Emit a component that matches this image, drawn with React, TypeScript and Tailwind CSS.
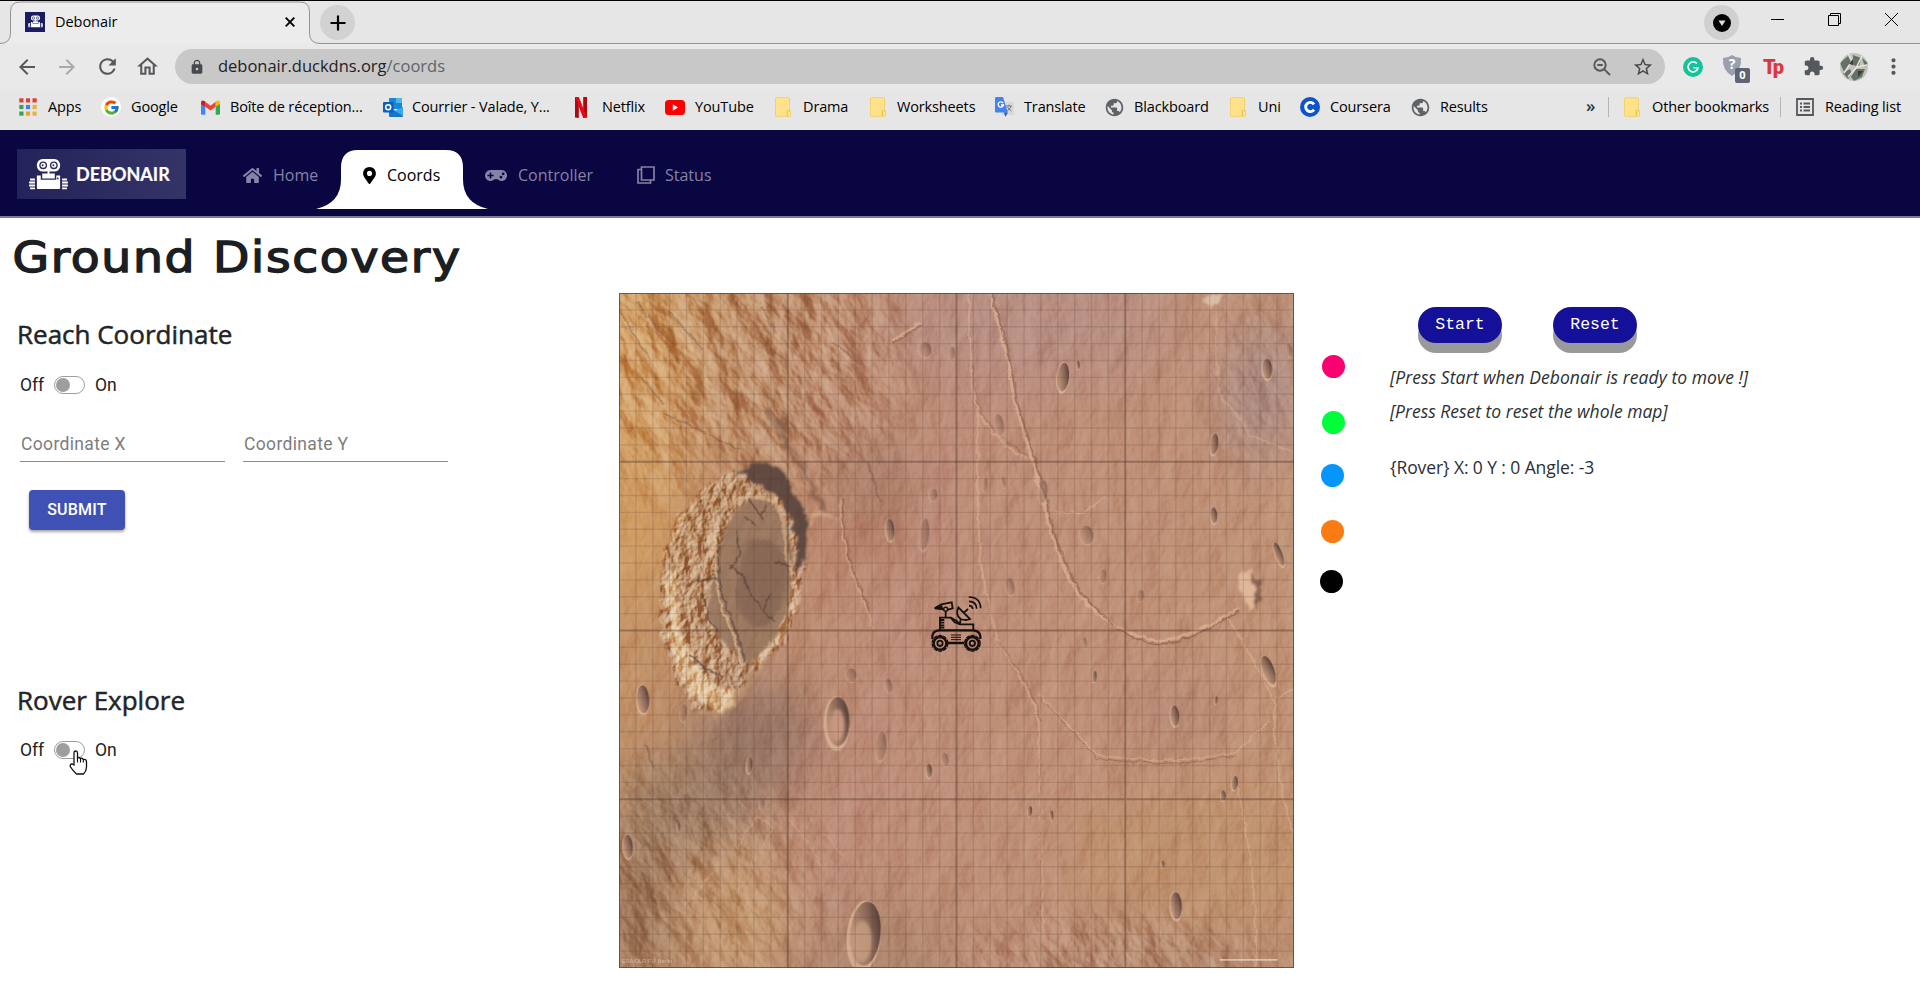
import React from "react";
import { FcGoogle } from "react-icons/fc";
import { FaHome, FaMapMarkerAlt, FaGamepad } from "react-icons/fa";
import {
  MdArrowBack, MdArrowForward, MdRefresh, MdOutlineHome, MdLock,
  MdStarBorder, MdExtension, MdMoreVert, MdPublic,
} from "react-icons/md";

const ui = "font-['Open_Sans',sans-serif]";

function RobotMark({ className }: { className: string }) {
  return (
    <svg className={className} viewBox="0 0 40 32" fill="#fff">
      <rect x="8" y="0" width="24" height="13" rx="6" />
      <circle cx="14.5" cy="6.5" r="4" fill="#29285f" />
      <circle cx="25.5" cy="6.5" r="4" fill="#29285f" />
      <circle cx="14.5" cy="6.5" r="2.600" />
      <circle cx="25.5" cy="6.5" r="2.600" />
      <circle cx="14" cy="6.5" r="1" fill="#29285f" />
      <circle cx="25" cy="6.5" r="1" fill="#29285f" />
      <path d="M19 12h2v3h5.500v5h-13v-5H19z" />
      <path d="M8 17h4v4.500h16V17h4v13q0 1-1 1H9q-1 0-1-1z" />
      <circle cx="29.500" cy="20" r=".9" fill="#29285f" />
      <path d="M1 20h5v2.200H1zM0 23.100h6v2.200H0zM0 26.200h6v2.200H0zM1 29.300h5v2H1zM34 20h5v2.200h-5zM34 23.100h6v2.200h-6zM34 26.200h6v2.200h-6zM34 29.300h5v2h-5z" />
    </svg>
  );
}

function AppsIcon() {
  const colors = ["#d93f35", "#d93f35", "#d93f35", "#35a356", "#4a7fe0", "#eab13a", "#35a356", "#e5a52f", "#eab13a"];
  return (
    <svg className="w-[18px] h-[18px]" viewBox="0 0 18 18">
      {colors.map((c, i) => (
        <rect key={i} x={(i % 3) * 6.6 + 0.3} y={Math.floor(i / 3) * 6.6 + 0.3} width="4.2" height="4.2" fill={c} />
      ))}
    </svg>
  );
}
const GoogleIcon = () => (
  <span className="flex size-5 items-center justify-center rounded-full bg-white"><FcGoogle className="size-[17px]" /></span>
);
const GmailIcon = () => (
  <svg className="w-[19px] h-[15px]" viewBox="0 0 19 15">
    <path d="M0 2.200V13.500q0 1.200 1.200 1.200H4.300V5.400z" fill="#4285f4" />
    <path d="M19 2.200V13.500q0 1.200-1.200 1.200H14.700V5.400z" fill="#34a853" />
    <path d="M4.300 1.800 9.500 5.700l5.200-3.900v4.900L9.500 10.600 4.300 6.700z" fill="#ea4335" />
    <path d="M0 2.400C0 .2 2.100-.3 4.300 1.500v5.300L0 3.900z" fill="#c5221f" />
    <path d="M19 2.400c0-2.200-2.100-2.700-4.300-.9v5.300L19 3.900z" fill="#fbbc04" />
  </svg>
);
const OutlookIcon = () => (
  <svg className="w-5 h-[19px]" viewBox="0 0 20 19">
    <rect x="6" y="0" width="13" height="11" rx="1" fill="#1a86d6" />
    <path d="M13 0h6v5h-6z" fill="#4bb9ee" />
    <path d="M6 9l6.500 4L20 9v9q0 1-1 1H7q-1 0-1-1z" fill="#1375c8" />
    <path d="M20 9v9l-8-5z" fill="#38a7ea" />
    <rect x="0" y="4" width="10.500" height="10.500" rx="1" fill="#0b61b5" />
    <circle cx="5.200" cy="9.200" r="2.500" fill="none" stroke="#fff" strokeWidth="1.500" />
  </svg>
);
const NetflixIcon = () => (
  <svg className="w-3 h-[21px]" viewBox="0 0 12 21">
    <path d="M0 0h3.800v21L0 20.600zM8.200 0H12v20.600L8.200 21z" fill="#b10710" />
    <path d="M0 0h3.800L12 20.600 8.200 21z" fill="#e20a16" />
  </svg>
);
const YoutubeIcon = () => (
  <svg className="w-5 h-[15px]" viewBox="0 0 20 15">
    <rect width="20" height="15" rx="3.500" fill="#f00" />
    <path d="M7.800 4.300 13 7.500l-5.200 3.200z" fill="#fff" />
  </svg>
);
const FolderIcon = () => (
  <svg className="w-4 h-[20px]" viewBox="0 0 16 20">
    <path d="M1.500.7h12q1 0 1 1v11l1 1.500v4.200q0 1-1 1h-13q-1 0-1-1V1.700q0-1 1-1z" fill="#ffe28a" stroke="#efcf6b" strokeWidth=".9" />
    <path d="M12.300 19v-4.500q0-1.200 1.200-1.200t1.500 1" fill="none" stroke="#e5bd45" strokeWidth="1" />
  </svg>
);
const TranslateIcon = () => (
  <svg className="w-[19px] h-[20px]" viewBox="0 0 19 20">
    <rect x="7" y="5" width="12" height="13" rx="1" fill="#d6d8dc" />
    <path d="M11 9h6M14 7.500V9m2 0q-.8 3.500-4 5m.5-4q1 2.500 4 4" stroke="#74797f" fill="none" />
    <path d="M1.200 0H8l4.800 15.500H1.200Q0 15.500 0 14.300V1.200Q0 0 1.200 0z" fill="#4283ee" />
    <path d="M9 15.500h3.800L10.500 20z" fill="#2c58b5" />
    <path d="M8.200 6.200A2.700 2.700 0 1 0 8.500 8H6" fill="none" stroke="#fff" strokeWidth="1.300" />
  </svg>
);
const GlobeIcon = () => <MdPublic className="size-[21px] -m-px text-[#5f6368]" />;
const CourseraIcon = () => (
  <svg className="size-5" viewBox="0 0 20 20">
    <circle cx="10" cy="10" r="10" fill="#0b54cd" />
    <path d="M14 7.300A4.600 4.600 0 1 0 14 12.700" fill="none" stroke="#fff" strokeWidth="2.900" />
  </svg>
);

type Mark = { icon: React.ReactNode; label: string; w: string; iw: string };
const bookmarks: Mark[] = [
  { icon: <AppsIcon />, label: "Apps", w: "w-[82px]", iw: "w-[29px]" },
  { icon: <GoogleIcon />, label: "Google", w: "w-[100px]", iw: "w-[30px]" },
  { icon: <GmailIcon />, label: "Boîte de réception...", w: "w-[182px]", iw: "w-[29px]" },
  { icon: <OutlookIcon />, label: "Courrier - Valade, Y...", w: "w-[192px]", iw: "w-[29px]" },
  { icon: <NetflixIcon />, label: "Netflix", w: "w-[90px]", iw: "w-[27px]" },
  { icon: <YoutubeIcon />, label: "YouTube", w: "w-[110px]", iw: "w-[30px]" },
  { icon: <FolderIcon />, label: "Drama", w: "w-[95px]", iw: "w-[28px]" },
  { icon: <FolderIcon />, label: "Worksheets", w: "w-[125px]", iw: "w-[27px]" },
  { icon: <TranslateIcon />, label: "Translate", w: "w-[110px]", iw: "w-[29px]" },
  { icon: <GlobeIcon />, label: "Blackboard", w: "w-[125px]", iw: "w-[29px]" },
  { icon: <FolderIcon />, label: "Uni", w: "w-[70px]", iw: "w-[28px]" },
  { icon: <CourseraIcon />, label: "Coursera", w: "w-[111px]", iw: "w-[30px]" },
  { icon: <GlobeIcon />, label: "Results", w: "w-[90px]", iw: "w-[29px]" },
];

function Browser() {
  return (
    <header className={`${ui} h-[130px] border-t border-black bg-[#e6e6e6] text-black`}>
      <div className="relative flex h-[43px]">
        <svg className="absolute inset-0 h-[43px] w-full" viewBox="0 0 1920 43" preserveAspectRatio="none">
          <path d="M0 42.500Q10.500 42.500 10.500 32V11Q10.500 1 20 1H300Q309.500 1 309.500 11V32Q309.500 42.500 320 42.500H1920V44H0z" fill="#ececec" stroke="#949494" />
        </svg>
        <div className="relative flex w-[310px] items-center pl-[25px] pb-[2px]">
          <span className="flex size-5 items-center justify-center bg-[#1b1b63]"><RobotMark className="h-[13px] w-[15px]" /></span>
          <span className="ml-[10px] text-[14.500px] tracking-[-0.05px]">Debonair</span>
          <svg className="ml-auto mr-[15px] mt-px size-[10px]" viewBox="0 0 10 10"><path d="M.7.7l8.600 8.600M9.300.7.7 9.300" stroke="#000" strokeWidth="1.900" /></svg>
        </div>
        <div className="relative mt-[4px] ml-[10px] flex size-[35px] items-center justify-center rounded-full bg-[#d2d2d2]">
          <svg className="size-[16px]" viewBox="0 0 16 16"><path d="M8 .5v15M.5 8h15" stroke="#000" strokeWidth="2.200" /></svg>
        </div>
        <div className="relative mt-[4px] ml-auto flex size-[35px] items-center justify-center rounded-full bg-[#d0d0d0]">
          <svg className="size-[18px]" viewBox="0 0 18 18"><circle cx="9" cy="9" r="9" /><path d="M5.500 6.500h7L9 12z" fill="#ddd" /></svg>
        </div>
        <div className="relative ml-[32px] mr-[21px] flex w-[128px] justify-between pt-[11px]">
          <svg className="h-[15px] w-[13px]" viewBox="0 0 13 15"><path d="M0 7.500h13" stroke="#000" /></svg>
          <svg className="size-[15px]" viewBox="0 0 15 15" fill="none" stroke="#000"><path d="M1.500 3.500h10v10h-10zM3.500 3.500V1.500h10v10h-2" /></svg>
          <svg className="size-[15px]" viewBox="0 0 15 15" stroke="#000"><path d="M1 1l13 13M14 1 1 14" /></svg>
        </div>
      </div>
      <div className="flex h-[45px] items-center bg-[#e9e9e9] pl-[15px]">
        <MdArrowBack className="size-[24px] text-[#55585c]" />
        <MdArrowForward className="ml-[16px] size-[24px] text-[#a9abad]" />
        <MdRefresh className="ml-[16px] size-[25px] text-[#55585c]" />
        <MdOutlineHome className="ml-[15px] size-[25px] text-[#55585c]" />
        <div className="ml-[15px] flex h-[35px] w-[1490px] items-center rounded-full bg-[#c8c8c8] pl-[14px]">
          <MdLock className="size-[16px] text-[#46494d]" />
          <span className="ml-[13px] text-[16.500px] tracking-[-0.01px] text-[#202124]">debonair.duckdns.org<span className="text-[#606469]">/coords</span></span>
          <svg className="ml-auto size-[18px]" viewBox="0 0 18 18" fill="none" stroke="#55585c" strokeWidth="1.900">
            <circle cx="7" cy="7" r="5.700" /><path d="M11.300 11.300 17 17M4.300 7h5.400" />
          </svg>
          <MdStarBorder className="ml-[21px] mr-[11px] size-[22px] text-[#45484c]" />
        </div>
        <svg className="ml-[18px] size-5" viewBox="0 0 20 20">
          <circle cx="10" cy="10" r="10" fill="#15c39a" />
          <path d="M13.800 6.500A5 5 0 1 0 15 10.800H10.500M13.800 13.800l1.200-3" fill="none" stroke="#fff" strokeWidth="1.600" />
        </svg>
        <div className="relative ml-[19px] h-[28px] w-[28px]">
          <svg className="h-[24px] w-[20px]" viewBox="0 0 20 24">
            <path d="M1 5Q6 5 10 2q4 3 9 3 1 12-9 18Q0 17 1 5z" fill="#9aa0ab" />
            <text x="10" y="16" textAnchor="middle" fontSize="14" fontWeight="700" fill="#fff" fontFamily="Open Sans, sans-serif">?</text>
          </svg>
          <span className="absolute left-[13px] top-[15px] flex h-[15px] w-[15px] items-center justify-center rounded-[2px] bg-[#5f6472] text-[11px] font-bold text-white">0</span>
        </div>
        <span className="ml-[13px] w-[20px] font-['Roboto',sans-serif] text-[20px] font-black leading-[20px] tracking-[-2px] text-[#e0363b]">Tp</span>
        <MdExtension className="ml-[20px] size-[21px] text-[#55585c]" />
        <svg className="ml-[16px] size-[28px]" viewBox="0 0 28 28">
          <clipPath id="avatar"><circle cx="14" cy="14" r="14" /></clipPath>
          <g clipPath="url(#avatar)">
            <rect width="28" height="28" fill="#c2c3b8" />
            <path d="M0 10 8 3l3 6-7 10zM13 2l8 3-2 9-6-2zM16 16l9 0-3 8-8 4-3-4zM3 20l7-4 2 5-4 5zM22 5l6 5-3 4z" fill="#66706a" />
            <path d="M8 0l4 8-8 12M22 3l-6 12-8 9M27 12l-10 2" stroke="#e7e5dc" strokeWidth="1.500" fill="none" />
            <path d="M9 11l4-5 0 6zM18 18l5 0-5 6z" fill="#353f3b" />
          </g>
        </svg>
        <MdMoreVert className="ml-[13px] size-[25px] text-[#55585c]" />
      </div>
      <div className="flex h-[40px] items-center pl-[19px] pb-[4px] text-[14.500px] tracking-[-0.14px]">
        {bookmarks.map((b, i) => (
          <div key={i} className={`flex shrink-0 items-center ${b.w}`}>
            <span className={`flex shrink-0 ${b.iw}`}>{b.icon}</span>
            <span className="whitespace-nowrap">{b.label}</span>
          </div>
        ))}
        <span className="ml-[85px] w-[22px] pb-[3px] text-[17px] font-semibold text-[#333]">»</span>
        <span className="h-5 w-px bg-[#b5b5b5]" />
        <span className="ml-[15px] flex w-[28px]"><FolderIcon /></span>
        <span className="w-[128px] whitespace-nowrap">Other bookmarks</span>
        <span className="h-5 w-px bg-[#b5b5b5]" />
        <svg className="ml-[15px] h-[18px] w-[18px] shrink-0" viewBox="0 0 18 18" fill="none" stroke="#55585c" strokeWidth="1.800">
          <path d="M1 1h16v16H1zM4 5.500h2M4 9h2M4 12.500h2M7.500 5.500H14M7.500 9H14M7.500 12.500H14" />
        </svg>
        <span className="ml-[11px] whitespace-nowrap">Reading list</span>
      </div>
    </header>
  );
}

function Nav() {
  return (
    <nav className={`${ui} flex h-[88px] border-b-2 border-[#7c7b9a] bg-[#090641] text-[16px] text-[#8583a6]`}>
      <div className="mt-[19px] ml-[17px] flex h-[50px] w-[169px] items-center bg-linear-to-r from-[#24225a] to-[#353467] pl-[12px]">
        <RobotMark className="h-[31px] w-[39px]" />
        <span className="ml-[8px] font-['Lato',sans-serif] text-[18px] font-bold text-white [-webkit-text-stroke:0.2px_#fff]">DEBONAIR</span>
      </div>
      <div className="ml-[57px] flex h-[90px] w-[98px] items-center">
        <FaHome className="size-[19px]" />
        <span className="ml-[11px]">Home</span>
      </div>
      <div className="relative flex h-[90px] w-[122px] items-center pl-[21px] text-black">
        <svg className="absolute left-[-25px] top-[20px] h-[59px] w-[172px]" viewBox="0 0 172 60" preserveAspectRatio="none">
          <path d="M0 60Q25 54 25 30V18Q25 0 42 0H130Q147 0 147 18V30Q147 54 172 60z" fill="#fff" />
        </svg>
        <FaMapMarkerAlt className="relative h-[17px] w-[15px]" />
        <span className="relative ml-[10px]">Coords</span>
      </div>
      <div className="flex h-[90px] items-center pl-[22px]">
        <FaGamepad className="h-[21px] w-[22px]" />
        <span className="ml-[11px] w-[119px]">Controller</span>
        <svg className="size-[18px]" viewBox="0 0 18 18" fill="none" stroke="#8583a6" strokeWidth="1.700"><path d="M4.500 1H17v13H4.500zM4.500 3.500H1V17h12.500v-3" /></svg>
        <span className="ml-[10px]">Status</span>
      </div>
    </nav>
  );
}

function Toggle() {
  return (
    <div className="flex h-[20px] items-center font-['Roboto',sans-serif] text-[17.500px] text-[#222]">
      <span className="w-[35px] pl-px">Off</span>
      <span className="flex h-[18px] w-[31px] items-center rounded-full border border-[#9e9e9e] pl-px"><span className="size-[14px] rounded-full bg-[#9e9e9e]" /></span>
      <span className="ml-[10px]">On</span>
    </div>
  );
}

const craters: [number, number, number, number][] = [
  [1015, 208, 13, 32], [1048, 181, 4, 10], [1472, 190, 11, 23], [1353, 358, 9, 24], [1352, 518, 8, 18],
  [1265, 967, 10, 23], [1399, 1118, 7, 16], [1373, 1146, 6, 12], [627, 550, 10, 25], [1085, 879, 5, 13],
  [1268, 1392, 13, 30], [74, 930, 14, 31], [312, 1078, 7, 18], [40, 1260, 11, 26], [714, 1090, 7, 16],
  [940, 1181, 5, 12], [989, 1190, 4, 11], [1238, 1300, 4, 9], [1357, 932, 4, 9], [153, 1217, 4, 11],
];
const faintCraters: [number, number, number, number][] = [
  [1068, 562, 15, 21], [1104, 654, 8, 16], [706, 147, 14, 17], [704, 560, 11, 35], [896, 678, 10, 20],
  [164, 960, 8, 20], [881, 444, 5, 13], [724, 472, 9, 14], [624, 900, 8, 16], [1188, 698, 8, 13],
  [540, 876, 12, 15], [340, 1165, 6, 12], [1063, 804, 5, 12], [765, 155, 7, 15], [1521, 148, 6, 15],
  [607, 1035, 12, 32], [872, 315, 10, 24], [970, 465, 10, 26], [750, 1065, 8, 16], [840, 450, 5, 16],
];

function Crater({ x, y, rx, ry, rot = 0 }: { x: number; y: number; rx: number; ry: number; rot?: number }) {
  return (
    <g transform={`translate(${x} ${y}) rotate(${rot}) scale(${rx} ${ry})`}>
      <circle r="1.120" cx="-.1" cy=".08" fill="#e8c4a6" opacity=".6" />
      <circle r="1" fill="url(#crater)" />
    </g>
  );
}

function Terrain() {
  const minor = Array.from({ length: 39 }, (_, i) => i + 1);
  return (
    <svg className="size-[675px]" viewBox="20 20 1512 1512" preserveAspectRatio="none">
      <defs>
        <linearGradient id="base" x2="1" y2=".25">
          <stop offset="0" stopColor="#ca9862" /><stop offset=".25" stopColor="#bd8d6a" />
          <stop offset=".5" stopColor="#bd8c78" /><stop offset="1" stopColor="#c09275" />
        </linearGradient>
        <linearGradient id="crater" x1="1" y1=".2" x2="0" y2=".7">
          <stop offset="0" stopColor="#4c3733" /><stop offset=".4" stopColor="#8a6657" /><stop offset="1" stopColor="#c99c80" />
        </linearGradient>
        <radialGradient id="white"><stop offset="0" stopColor="#fff" /><stop offset=".5" stopColor="#fff" stopOpacity=".75" /><stop offset="1" stopColor="#fff" stopOpacity="0" /></radialGradient>
        <filter id="soft" x="-50%" y="-50%" width="200%" height="200%"><feGaussianBlur stdDeviation="60" /></filter>
        <filter id="blur1"><feGaussianBlur stdDeviation="1.600" /></filter>
        <filter id="blur5"><feGaussianBlur stdDeviation="4" /></filter>
        <filter id="relief" x="0" y="0" width="100%" height="100%" colorInterpolationFilters="sRGB">
          <feTurbulence type="fractalNoise" baseFrequency="0.014 0.009" numOctaves="6" seed="8" />
          <feColorMatrix values="0 0 0 0 0 0 0 0 0 0 0 0 0 0 0 1 0 0 0 0" />
          <feDiffuseLighting surfaceScale="9" lightingColor="#fff"><feDistantLight azimuth="205" elevation="32" /></feDiffuseLighting>
        </filter>
        <filter id="ridges" x="0" y="0" width="100%" height="100%" colorInterpolationFilters="sRGB">
          <feTurbulence type="fractalNoise" baseFrequency="0.016 0.009" numOctaves="5" seed="21" />
          <feColorMatrix values="0 0 0 0 0 0 0 0 0 0 0 0 0 0 0 1 0 0 0 0" />
          <feDiffuseLighting surfaceScale="20" lightingColor="#fff"><feDistantLight azimuth="195" elevation="32" /></feDiffuseLighting>
        </filter>
        <filter id="scarp" x="0" y="0" width="100%" height="100%" colorInterpolationFilters="sRGB">
          <feTurbulence type="fractalNoise" baseFrequency="0.035 0.03" numOctaves="5" seed="5" />
          <feColorMatrix values="0 0 0 0 0 0 0 0 0 0 0 0 0 0 0 1 0 0 0 0" />
          <feDiffuseLighting surfaceScale="12" lightingColor="#fff"><feDistantLight azimuth="205" elevation="32" /></feDiffuseLighting>
        </filter>
        <filter id="rough" x="-10%" y="-10%" width="120%" height="120%">
          <feTurbulence type="fractalNoise" baseFrequency="0.035" numOctaves="4" seed="4" result="n" />
          <feDisplacementMap in="SourceGraphic" in2="n" scale="34" xChannelSelector="R" yChannelSelector="G" />
          <feGaussianBlur stdDeviation="2.500" />
        </filter>
        <filter id="wobble" x="-10%" y="-10%" width="120%" height="120%">
          <feTurbulence type="fractalNoise" baseFrequency="0.05" numOctaves="3" seed="9" result="n" />
          <feDisplacementMap in="SourceGraphic" in2="n" scale="12" xChannelSelector="R" yChannelSelector="G" />
          <feGaussianBlur stdDeviation="1" />
        </filter>
        <mask id="rugged" maskUnits="userSpaceOnUse" x="20" y="20" width="1512" height="1512">
          <ellipse cx="150" cy="130" rx="560" ry="420" fill="url(#white)" />
          <ellipse cx="440" cy="200" rx="290" ry="360" fill="url(#white)" opacity=".6" />
          <ellipse cx="150" cy="1350" rx="430" ry="360" fill="url(#white)" opacity=".6" />
          <ellipse cx="1130" cy="1520" rx="460" ry="150" fill="url(#white)" opacity=".7" />
          <ellipse cx="1440" cy="200" rx="160" ry="280" fill="url(#white)" opacity=".3" />
        </mask>
        <mask id="rim" maskUnits="userSpaceOnUse" x="20" y="20" width="1512" height="1512">
          <path d="M320 410Q190 430 140 540 100 650 108 740 130 880 190 950 260 980 300 880L400 800 435 640 430 520 390 430z" fill="#fff" filter="url(#rough)" />
        </mask>
      </defs>
      <rect x="20" y="20" width="1512" height="1512" fill="url(#base)" />
      <g filter="url(#soft)">
        <ellipse cx="60" cy="350" rx="100" ry="380" fill="#d6a05f" opacity=".7" />
        <ellipse cx="950" cy="90" rx="330" ry="140" fill="#b88f86" opacity=".8" />
        <ellipse cx="1460" cy="240" rx="80" ry="160" fill="#aa8b86" />
        <ellipse cx="590" cy="440" rx="60" ry="90" fill="#8f6a5c" opacity=".6" />
        <ellipse cx="570" cy="570" rx="110" ry="40" fill="#ad6a56" opacity=".6" />
        <ellipse cx="330" cy="1010" rx="120" ry="120" fill="#8a6a63" opacity=".8" />
        <ellipse cx="180" cy="1160" rx="170" ry="110" fill="#907663" opacity=".7" />
        <ellipse cx="60" cy="1400" rx="80" ry="180" fill="#8f6a50" opacity=".8" />
        <ellipse cx="290" cy="1420" rx="120" ry="160" fill="#c49b6e" opacity=".85" />
        <ellipse cx="600" cy="1500" rx="190" ry="100" fill="#a88268" opacity=".7" />
        <ellipse cx="1350" cy="1280" rx="330" ry="160" fill="#bf9168" opacity=".6" />
        <ellipse cx="1230" cy="1530" rx="330" ry="50" fill="#a37c5f" opacity=".6" />
        <ellipse cx="1250" cy="960" rx="120" ry="80" fill="#b08274" opacity=".6" />
      </g>
      <rect x="20" y="20" width="1512" height="1512" filter="url(#relief)" className="mix-blend-soft-light" opacity=".36" />
      <g mask="url(#rugged)" className="mix-blend-soft-light">
        <g transform="rotate(-32 400 400)"><rect x="-700" y="-900" width="2900" height="3200" filter="url(#ridges)" opacity=".75" /></g>
      </g>

      <g filter="url(#rough)">
        <path d="M320 400Q200 440 160 550 100 620 112 740 135 900 205 965 280 985 320 880 380 830 405 740 430 640 425 560 390 410 320 400z" fill="#be9670" opacity=".7" />
        <path d="M130 640Q122 800 165 890 215 965 275 950L285 915Q200 905 165 790 140 720 150 650z" fill="#e4c69b" opacity=".85" />
        <path d="M300 860Q380 830 410 740L415 670 400 640 375 780z" fill="#d4ae86" opacity=".75" />
      </g>
      <g mask="url(#rim)" className="mix-blend-soft-light"><rect x="20" y="20" width="1512" height="1512" filter="url(#scarp)" /></g>
      <g filter="url(#rough)">
        <path d="M285 418Q340 375 395 435 442 500 446 600L418 650Q422 530 375 475 320 435 285 418z" fill="#5c463f" opacity=".95" />
        <path d="M350 275Q390 300 400 350L470 480 500 515 470 510 430 420 375 330z" fill="#76564a" opacity=".5" />
        <path d="M455 505 510 520 460 530 440 545z" fill="#dcae8d" opacity=".7" />
      </g>
      <g filter="url(#wobble)">
        <path d="M330 478Q275 490 252 570 225 680 215 740 240 800 310 852 365 815 395 735 420 620 395 540 375 485 330 478z" fill="#9a7860" opacity=".92" filter="url(#blur5)" />
        <path d="M310 570Q375 560 395 620 400 720 350 765 290 780 280 690z" fill="#7f6152" opacity=".6" filter="url(#blur5)" />
        <path d="M265 500Q310 455 370 490 395 530 392 600L410 650" fill="none" stroke="#d6b088" strokeWidth="8" opacity=".65" />
        <path d="M236 560Q230 680 258 745 285 800 296 855" fill="none" stroke="#e0bd94" strokeWidth="5" opacity=".75" />
        <path d="M243 570Q238 680 268 740 290 800 304 850M310 480L335 515 350 495M335 515 345 530M270 630L300 655 310 690 345 735 370 755M370 620L405 635M180 665 240 660M205 690 225 760 245 780M180 830 210 860 250 880M285 550 290 610 270 640M325 540 300 520M360 690 345 735" fill="none" stroke="#514139" strokeWidth="3.500" opacity=".7" />
      </g>

      <g fill="none" filter="url(#wobble)">
        <g stroke="#e3b899" strokeWidth="4.500" opacity=".65">
          <path d="M848 20Q890 150 905 260 940 370 970 480 1000 640 1070 720 1150 790 1230 800 1320 785 1410 725" strokeWidth="6.500" />
          <path d="M805 20Q800 190 825 290 870 360 930 390M825 290Q818 450 830 620 850 740 870 800" strokeWidth="3.500" />
          <path d="M860 790Q940 900 960 980 965 1200 970 1440M960 920Q1020 980 1090 1055 1190 1070 1290 1065L1400 1050 1480 975M1380 740Q1450 850 1490 940 1480 1060 1530 1230M1490 930 1530 905M1000 510 1060 515 1110 475M1400 1110Q1450 1300 1447 1530M515 480Q520 620 560 690L590 770" strokeWidth="3" />
          <path d="M630 128 697 86" strokeWidth="6" />
          <path d="M400 1200Q450 1250 475 1310M280 1270 330 1190 365 1220 340 1260M160 1400 230 1320M480 1230 520 1280" strokeWidth="3" opacity=".7" />
          <path d="M1360 60Q1350 170 1370 260 1420 300 1430 340L1532 375" strokeWidth="4" opacity=".7" />
        </g>
        <g stroke="#7a5142" opacity=".6" strokeWidth="3.500">
          <path d="M854 20Q896 150 911 260 946 370 977 480 1007 640 1077 716 1150 797 1230 809 1320 793 1410 733" />
          <path d="M812 180Q812 240 831 290 875 350 935 384M865 796Q945 900 966 980M965 928Q1020 985 1090 1062 1190 1076 1290 1072L1400 1057" strokeWidth="2" />
          <path d="M520 480Q525 620 565 690L580 730M580 400 605 490M70 1320 105 1400M80 1030 100 1090M632 134 697 93" strokeWidth="3" />
          <path d="M20 60Q60 120 90 170M60 40Q100 100 150 140M130 60 210 150M340 50 370 110M500 130 560 180M120 290 230 340 290 370M70 210 120 270" strokeWidth="4" opacity=".7" />
        </g>
      </g>
      <g filter="url(#blur1)">
        {craters.map(([x, y, rx, ry], i) => <Crater key={i} x={x} y={y} rx={rx} ry={ry} rot={i % 3 === 0 ? 5 : -4} />)}
        <g opacity=".5">
          {faintCraters.map(([x, y, rx, ry], i) => <Crater key={i} x={x} y={y} rx={rx} ry={ry} rot={i % 2 === 0 ? -10 : 4} />)}
        </g>
        <Crater x={510} y={980} rx={26} ry={55} />
        <Crater x={572} y={1455} rx={34} ry={72} rot={5} />
        <Crater x={1475} y={865} rx={13} ry={34} rot={-20} />
        <Crater x={1498} y={605} rx={8} ry={28} rot={-20} />
      </g>
      <g filter="url(#rough)">
        <path d="M1415 650 1435 640 1450 690 1430 735 1418 700z" fill="#e0b798" />
        <path d="M1432 650 1460 665 1450 720 1440 700z" fill="#6c493d" opacity=".7" />
        <ellipse cx="1353" cy="38" rx="19" ry="17" fill="#e2c8b4" opacity=".8" />
      </g>
      <g filter="url(#blur5)">
        <ellipse cx="509" cy="988" rx="16" ry="36" fill="#c79780" />
        <ellipse cx="565" cy="1472" rx="22" ry="46" fill="#c59c7f" opacity=".85" />
      </g>
      <g stroke="#53362c">
        {minor.map((i) => (
          <path key={i} d={`M${20 + i * 37.8} 20V1532M20 ${20 + i * 37.8}H1532`} opacity={i % 10 === 0 ? 0.4 : 0.16} strokeWidth={i % 10 === 0 ? 4.5 : 3} />
        ))}
      </g>
      <rect x="21" y="21" width="1510" height="1510" fill="none" stroke="#54443c" strokeWidth="2.400" opacity=".8" />
      <text x="26" y="1520" fontSize="13" fill="#e8d8c8" opacity=".6" fontFamily="Liberation Sans, sans-serif">ESA/DLR/FU Berlin</text>
      <path d="M1365 1514h130" stroke="#eadac8" strokeWidth="4" opacity=".7" />
    </svg>
  );
}

function Wheel({ x }: { x: number }) {
  return (
    <g>
      <circle cx={x} cy="193" r="19" strokeWidth="7" />
      <circle cx={x} cy="193" r="23.500" strokeWidth="4" strokeDasharray="12 3" />
      <circle cx={x} cy="193" r="8" strokeWidth="5.500" />
    </g>
  );
}

function Rover() {
  return (
    <svg className="absolute left-[281px] top-[286px] h-[90px] w-[120px]" viewBox="0 0 360 270" fill="none" stroke="#15100e" strokeWidth="5">
      <path d="M97 180Q95 154 118 154H218Q243 154 241 180M144 192H193" strokeWidth="7" />
      <Wheel x={120} />
      <Wheel x={217} />
      <path d="M153 168H183M153 175H183M153 182H183" strokeWidth="3" />
      <path d="M120 154V116H152L164 130 180 136H220V154M122 123h11M122 131h11M122 139h11M122 146h11" strokeWidth="5.500" />
      <path d="M137 115V98M104 88 124 76 155 70 158 88 144 92M104 88 130 91" strokeWidth="5.500" /><path d="M104 88 125 78 128 90z" fill="#15100e" strokeWidth="2" />
      <circle cx="137" cy="91" r="6" strokeWidth="4.500" />
      <path d="M175 85Q165 108 182 120 198 126 210 120zM192 101 204 90M152 116 170 126 180 136M182 120 180 134" strokeWidth="5.500" />
      <path d="M207 80Q217 80 218 90M207 67Q229 67 230 89M206 54Q241 54 242 88" strokeWidth="5" />
    </svg>
  );
}

function Field({ label }: { label: string }) {
  return <div className="h-[35px] w-[205px] border-b border-[#8c8c8c] pl-px font-['Roboto',sans-serif] text-[17.500px] leading-[34px] tracking-[0.35px] text-[#7d7d7d]">{label}</div>;
}

function PillButton({ label }: { label: string }) {
  return (
    <button className="h-[36px] w-[84px] rounded-[18px] bg-[#15109a] font-['Liberation_Mono',monospace] text-[16.500px] text-white shadow-[0_10px_0_#999]">{label}</button>
  );
}

const swatches = [
  { c: "bg-[#fb0071]", p: "mt-[62px] ml-[28px]" },
  { c: "bg-[#00fd3b]", p: "mt-[33px] ml-[28px]" },
  { c: "bg-[#0496fd]", p: "mt-[30px] ml-[27px]" },
  { c: "bg-[#fa7b14]", p: "mt-[33px] ml-[27px]" },
  { c: "bg-black", p: "mt-[27px] ml-[26px]" },
];

export default function App() {
  return (
    <div className="h-[986px] w-[1920px] overflow-hidden bg-white">
      <Browser />
      <Nav />
      <main className={`${ui} text-[#212529]`}>
        <h1 className="h-[75px] origin-left scale-x-[1.125] pl-[11px] pt-[11px] font-['DejaVu_Sans',sans-serif] text-[42px] leading-[58px] tracking-[1.500px] text-[#1b1e22] [-webkit-text-stroke:1.400px_#1b1e22]">Ground Discovery</h1>
        <div className="flex">
          <section className="w-[619px] pl-[19px]">
            <h2 className="ml-[-2px] mt-[23px] text-[26px] font-medium leading-[36px] [-webkit-text-stroke:0.5px_#212529]">Reach Coordinate</h2>
            <div className="mt-[23px]"><Toggle /></div>
            <div className="mt-[32px] ml-px flex gap-[18px]"><Field label="Coordinate X" /><Field label="Coordinate Y" /></div>
            <button className="ml-[10px] mt-[28px] h-[40px] w-[96px] rounded-[4px] bg-[#3f51b5] font-['Roboto',sans-serif] text-[16px] font-medium tracking-[0.2px] text-white shadow-[0_2px_3px_rgba(0,0,0,0.35)]">SUBMIT</button>
            <h2 className="ml-[-2px] mt-[152px] text-[26px] font-medium leading-[36px] [-webkit-text-stroke:0.5px_#212529]">Rover Explore</h2>
            <div className="relative mt-[22px]">
              <Toggle />
              <svg className="absolute left-[50px] top-[10px] h-[26px] w-[19px]" viewBox="0 0 19 26">
                <path d="M5 15V3Q5 1 6.700 1T8.500 3V8Q10 6.800 11.500 8.500 13.200 7.700 14.300 9.500 17.500 8.800 17.500 12V17Q17.500 21 14.500 24H7.500Q4 21 1.200 16.500 1 14 3 14z" fill="#fff" stroke="#111" strokeWidth="1.300" />
                <path d="M8.500 8v4.500M11.500 8.500v4M14.300 9.500v3" stroke="#111" strokeWidth="1.100" />
              </svg>
            </div>
          </section>
          <div className="relative size-[675px]"><Terrain /><Rover /></div>
          <div className="w-[96px]">
            {swatches.map((s) => <div key={s.c} className={`size-[23px] rounded-full ${s.c} ${s.p}`} />)}
          </div>
          <section className="text-[17.500px] text-[#2b3036]">
            <div className="ml-[28px] mt-[14px] flex gap-[51px]"><PillButton label="Start" /><PillButton label="Reset" /></div>
            <p className="mt-[22px] leading-[24px] italic tracking-[0.07px]">[Press Start when Debonair is ready to move !]</p>
            <p className="mt-[10px] leading-[24px] italic">[Press Reset to reset the whole map]</p>
            <p className="mt-[32px] leading-[24px] tracking-[-0.1px]">{"{Rover} X: 0 Y : 0 Angle: -3"}</p>
          </section>
        </div>
      </main>
    </div>
  );
}
